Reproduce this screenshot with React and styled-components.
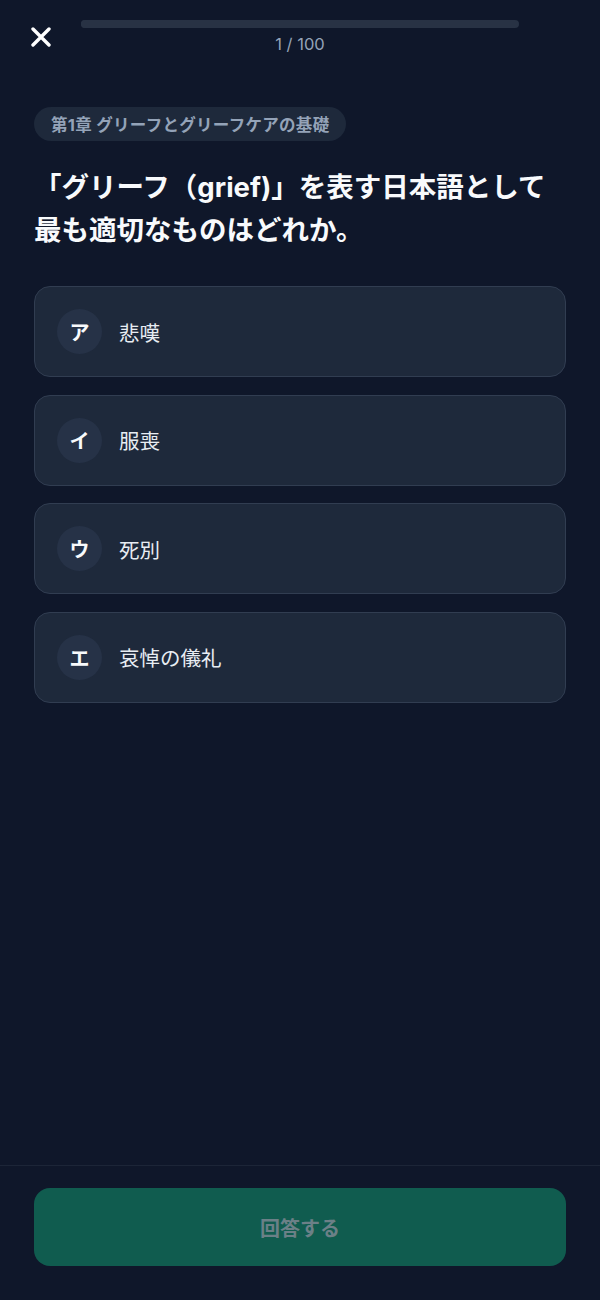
import React from "react";
import styled, { createGlobalStyle } from "styled-components";

const GlobalStyle = createGlobalStyle`
  * { box-sizing: border-box; }
  body {
    margin: 0;
    background: #0f172a;
    font-family: "Inter", "Noto Sans CJK JP", sans-serif;
    color: #f1f5f9;
  }
`;

const Page = styled.div`
  min-height: 1300px;
  display: flex;
  flex-direction: column;
  background: #0f172a;
`;

const Header = styled.div`
  display: grid;
  grid-template-columns: 20px 1fr 20px;
  column-gap: 30px;
  align-items: start;
  padding: 20px 31px 0;
`;

const CloseButton = styled.button`
  width: 20px;
  height: 20px;
  margin-top: 7px;
  padding: 0;
  border: none;
  background: none;
  display: flex;
  cursor: pointer;
`;

const Progress = styled.div`
  display: flex;
  flex-direction: column;
  align-items: center;
`;

const Track = styled.div`
  width: 100%;
  height: 8px;
  border-radius: 4px;
  background: #283244;
  overflow: hidden;
`;

const Fill = styled.div`
  height: 100%;
  background: #283244;
`;

const Counter = styled.div`
  margin-top: 7px;
  font-size: 16.5px;
  line-height: 18px;
  color: #94a3b8;
`;

const Main = styled.main`
  flex: 1;
  padding: 54px 34px 0;
`;

const Chip = styled.span`
  display: inline-flex;
  align-items: center;
  height: 34px;
  padding: 0 17px;
  border-radius: 17px;
  background: #1e293b;
  color: #94a3b8;
  font-size: 16.5px;
  letter-spacing: 0.3px;
  font-weight: 700;
`;

const Question = styled.h1`
  margin: 25px 0 0;
  font-size: 27.5px;
  line-height: 43px;
  font-weight: 700;
  color: #f8fafc;
`;

const Choices = styled.div`
  margin-top: 34px;
  display: flex;
  flex-direction: column;
  gap: 17.5px;
`;

const Choice = styled.button`
  display: flex;
  align-items: center;
  gap: 17px;
  height: 91px;
  flex-shrink: 0;
  padding: 0 22px;
  border: 1px solid #313d51;
  border-radius: 16px;
  background: #1e293b;
  font-family: inherit;
  text-align: left;
  cursor: pointer;
`;

const Badge = styled.span`
  width: 45px;
  height: 45px;
  flex-shrink: 0;
  border-radius: 50%;
  background: #263247;
  display: flex;
  align-items: center;
  justify-content: center;
  color: #f8fafc;
  font-size: 20px;
  font-weight: 700;
`;

const ChoiceText = styled.span`
  font-size: 20.5px;
  color: #e8edf3;
`;

const Footer = styled.footer`
  border-top: 1px solid #1c2537;
  padding: 22px 34px 34px;
`;

const SubmitButton = styled.button`
  width: 100%;
  height: 78px;
  border: none;
  border-radius: 16px;
  background: #105c4f;
  color: #6b8087;
  font-family: inherit;
  font-size: 20px;
  font-weight: 700;
`;

const choices = [
  { label: "ア", text: "悲嘆" },
  { label: "イ", text: "服喪" },
  { label: "ウ", text: "死別" },
  { label: "エ", text: "哀悼の儀礼" },
];

function CloseIcon() {
  return (
    <svg width="20" height="20" viewBox="0 0 20 20">
      <path
        d="M2 2 L18 18 M18 2 L2 18"
        stroke="#ffffff"
        strokeWidth="3.4"
        strokeLinecap="round"
      />
    </svg>
  );
}

export default function App() {
  const current = 1;
  const total = 100;
  return (
    <Page>
      <GlobalStyle />
      <Header>
        <CloseButton aria-label="閉じる">
          <CloseIcon />
        </CloseButton>
        <Progress>
          <Track>
            <Fill style={{ width: `${(current / total) * 100}%` }} />
          </Track>
          <Counter>
            {current} / {total}
          </Counter>
        </Progress>
        <span />
      </Header>
      <Main>
        <Chip>第1章 グリーフとグリーフケアの基礎</Chip>
        <Question>「グリーフ（grief)」を表す日本語として最も適切なものはどれか。</Question>
        <Choices>
          {choices.map((c) => (
            <Choice key={c.label}>
              <Badge>{c.label}</Badge>
              <ChoiceText>{c.text}</ChoiceText>
            </Choice>
          ))}
        </Choices>
      </Main>
      <Footer>
        <SubmitButton disabled>回答する</SubmitButton>
      </Footer>
    </Page>
  );
}
